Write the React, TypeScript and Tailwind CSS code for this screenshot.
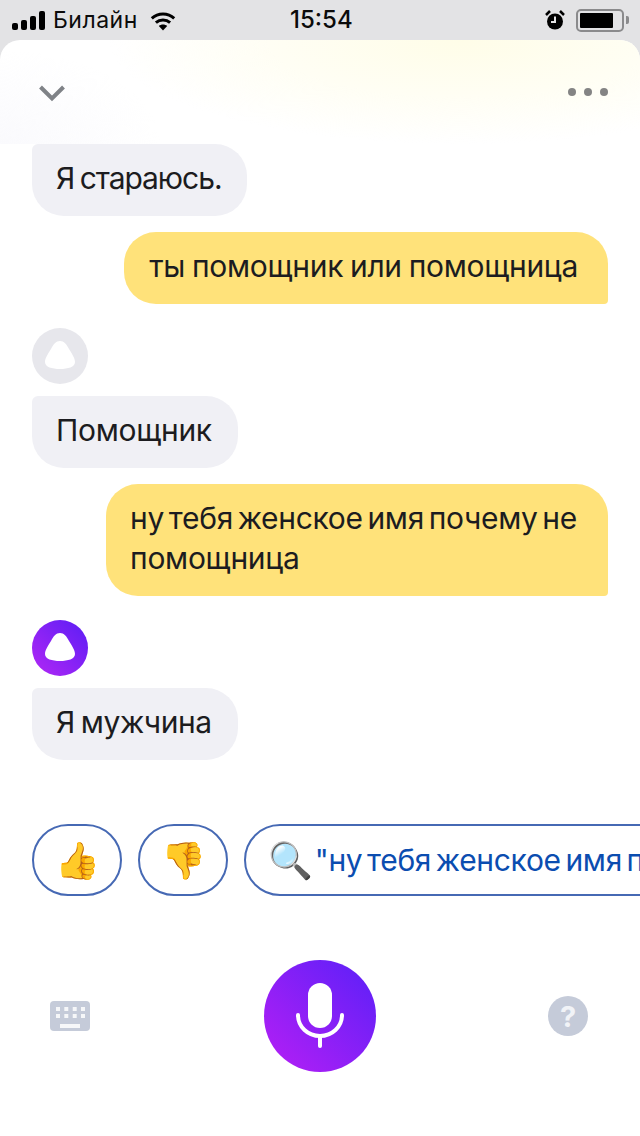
const font = "font-['Inter','Noto_Sans',sans-serif]";

const AliceLogo = ({ fill = "#fff" }: { fill?: string }) => (
  <svg className="mb-[2px]" width="30" height="28" viewBox="0 0 30 28">
    <path
      d="M15 0C11 0 8.500 3 6 8 3 13 0 17 0 21c0 5 7 7 15 7s15-2 15-7c0-4-3-8-6-13-2.500-5-5-8-9-8z"
      fill={fill}
    />
  </svg>
);

const StatusBar = () => (
  <div className="flex h-10 items-center bg-[#e3e3e5] pl-3 pr-[11px] text-[#0b0b0b]">
    <div className="flex w-[200px] items-center">
      {/* signal */}
      <div className="flex items-end gap-[3px]">
        <div className="h-[7px] w-[6px] rounded-[2px] bg-black" />
        <div className="h-[10px] w-[6px] rounded-[2px] bg-black" />
        <div className="h-[14px] w-[6px] rounded-[2px] bg-black" />
        <div className="h-[19px] w-[6px] rounded-[2px] bg-black" />
      </div>
      <span className="ml-2 text-[23px] leading-none tracking-[0.5px]">Билайн</span>
      <svg className="ml-[11px]" width="28" height="21" viewBox="0 0 28 21">
        <path d="M14 20.500l-4.200-4.600c2.400-2 6-2 8.400 0z" fill="#000" />
        <path d="M6.900 12.700c4-3.600 10.200-3.600 14.200 0" fill="none" stroke="#000" strokeWidth="3" />
        <path d="M2.800 8.300c6.300-5.800 16.100-5.800 22.400 0" fill="none" stroke="#000" strokeWidth="3" />
      </svg>
    </div>
    <span className="ml-[78px] text-[24px] font-medium leading-none">15:54</span>
    <div className="ml-auto flex items-center">
      <svg width="22" height="22" viewBox="0 0 22 22">
        <circle cx="11" cy="12.500" r="8" fill="#000" />
        <path d="M11 7.500v5.500H7" fill="none" stroke="#e3e3e5" strokeWidth="2" />
        <path d="M2 6l4-4M20 6l-4-4" stroke="#000" strokeWidth="2.500" />
      </svg>
      <div className="ml-[10px] flex h-[23px] w-12 items-center rounded-[5px] border-2 border-[#8a8a8c] p-[2px]">
        <div className="h-full w-[33px] rounded-[1px] bg-black" />
      </div>
      <div className="ml-[2px] h-[8px] w-[3px] rounded-r-[2px] bg-[#8a8a8c]" />
    </div>
  </div>
);

const Header = () => (
  <div className="flex h-[104px] items-start justify-between rounded-t-[20px] bg-[radial-gradient(ellipse_55%_100%_at_72%_0%,#fffde8_0%,#fffef4_55%,#ffffff00_100%),radial-gradient(ellipse_25%_90%_at_0%_100%,#fafafd_0%,#ffffff00_100%)] pl-[38px] pr-[32px] pt-[44px]">
    <svg width="28" height="18" viewBox="0 0 28 18">
      <path d="M2.500 3L14 14.500 25.500 3" fill="none" stroke="#7f8287" strokeWidth="4" />
    </svg>
    <div className="mt-[4px] flex gap-2">
      <div className="size-2 rounded-full bg-[#848484]" />
      <div className="size-2 rounded-full bg-[#848484]" />
      <div className="size-2 rounded-full bg-[#848484]" />
    </div>
  </div>
);

const AliceBubble = ({ text, className = "tracking-[-0.3px]" }: { text: string; className?: string }) => (
  <div
    className={`flex h-[72px] items-center self-start rounded-[32px] rounded-tl-[6px] bg-[#f0f0f5] pb-[4px] pl-6 pr-[26px] text-[30px] leading-9 [word-spacing:-2px] text-[#1c1c20] ${className}`}
  >
    {text}
  </div>
);

const UserBubble = ({ children, className }: { children: React.ReactNode; className: string }) => (
  <div
    className={`self-end rounded-[32px] rounded-br-[4px] bg-[#ffe27a] text-[30px] tracking-[-0.3px] text-[#1c1c20] ${className}`}
  >
    {children}
  </div>
);

const Avatar = ({ active }: { active?: boolean }) => (
  <div
    className={`flex size-14 items-center justify-center rounded-full ${
      active ? "bg-[linear-gradient(45deg,#b327f5,#5a1ef5)]" : "bg-[#e7e7ec]"
    }`}
  >
    <AliceLogo />
  </div>
);

const Chip = ({ children }: { children: React.ReactNode }) => (
  <div className="flex h-[72px] w-[90px] shrink-0 items-center justify-center rounded-[36px] border-2 border-[#4669b4] text-[36px] leading-none">
    {children}
  </div>
);

export default function App() {
  return (
    <div className={`flex h-[1136px] w-[640px] flex-col overflow-hidden bg-[#e3e3e5] ${font}`}>
      <StatusBar />
      <div className="flex min-h-0 flex-1 flex-col rounded-t-[20px] bg-white">
        <Header />
        <div className="flex flex-col px-8">
          <AliceBubble text="Я стараюсь." className="tracking-[-1.05px]" />
          <UserBubble className="mt-4 flex h-[72px] items-center pb-[4px] pl-[25px] pr-[30px] leading-9 [word-spacing:-1.3px]">
            ты помощник или помощница
          </UserBubble>
          <div className="mt-6">
            <Avatar />
          </div>
          <div className="mt-3 flex flex-col">
            <AliceBubble text="Помощник" />
          </div>
          <UserBubble className="mt-4 pb-[18px] pl-6 pr-[31px] pt-[14px] leading-10 [word-spacing:-3.4px]">
            ну тебя женское имя почему не
            <br />
            помощница
          </UserBubble>
          <div className="mt-6">
            <Avatar active />
          </div>
          <div className="mt-3 flex flex-col">
            <AliceBubble text="Я мужчина" className="tracking-[-0.45px]" />
          </div>
        </div>

        {/* suggests */}
        <div className="mt-16 flex gap-4 pl-8">
          <Chip>👍</Chip>
          <Chip>👎</Chip>
          <div className="flex h-[72px] shrink-0 items-center whitespace-nowrap rounded-[36px] border-2 border-[#4669b4] pl-[22px] pr-6 text-[30px] tracking-[-0.3px] [word-spacing:-3.5px] text-[#0b4db0]">
            <span className="mr-[2px] text-[36px] leading-none">🔍</span>
            "ну тебя женское имя почему
          </div>
        </div>

        {/* bottom bar */}
        <div className="mt-16 flex items-center justify-between pl-[50px] pr-[52px]">
          <svg width="40" height="30" viewBox="0 0 40 30">
            <rect width="40" height="30" rx="4" fill="#c5cbd9" />
            <g fill="#fff" opacity="0.85">
              <rect x="6" y="6" width="4" height="4" />
              <rect x="14.300" y="6" width="4" height="4" />
              <rect x="22.700" y="6" width="4" height="4" />
              <rect x="31" y="6" width="4" height="4" />
              <rect x="6" y="13" width="4" height="4" />
              <rect x="14.300" y="13" width="4" height="4" />
              <rect x="22.700" y="13" width="4" height="4" />
              <rect x="31" y="13" width="4" height="4" />
              <rect x="10" y="23" width="20" height="4" />
            </g>
          </svg>
          <div className="ml-[2px] flex size-28 items-center justify-center rounded-full bg-[linear-gradient(45deg,#b71ff5,#5a20f8)]">
            <svg width="48" height="66" viewBox="0 0 48 66">
              <rect x="12" y="0" width="24" height="45" rx="12" fill="#fff" />
              <path d="M2 32c0 12 10 21 22 21s22-9 22-21" fill="none" stroke="#fff" strokeWidth="4" strokeLinecap="round" />
              <path d="M24 53v10" stroke="#fff" strokeWidth="4" strokeLinecap="round" />
            </svg>
          </div>
          <div className="flex size-10 items-center justify-center rounded-full bg-[#c5cbd9] text-[29px] font-bold leading-none text-[#f1f3f7]">
            ?
          </div>
        </div>
      </div>
    </div>
  );
}
